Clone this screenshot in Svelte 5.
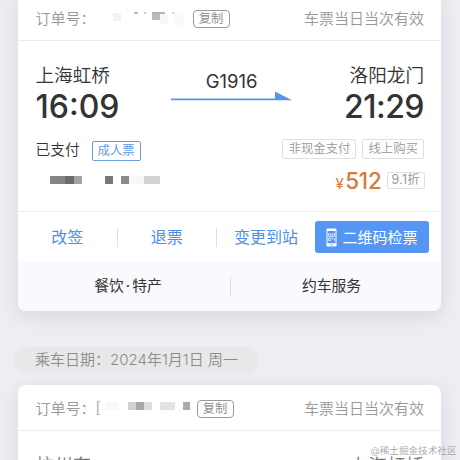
<script>
  const orders = [
    {
      id: 1,
      mosaicWidth: 72,
      mosaic: [
        { x: 0, y: 2, w: 8, h: 8, c: '#f3f3f3' },
        { x: 21, y: 1, w: 4, h: 2, c: '#bdbdbd' },
        { x: 31, y: 1, w: 2, h: 2, c: '#c8c8c8' },
        { x: 39, y: 1, w: 13, h: 2, c: '#b4b4b4' },
        { x: 39, y: 3, w: 8, h: 6, c: '#bababa' },
        { x: 47, y: 3, w: 8, h: 10, c: '#f7f7f7' },
        { x: 59, y: 1, w: 3, h: 2, c: '#dedede' },
        { x: 62, y: 4, w: 9, h: 10, c: '#fafafa' }
      ],
      prefix: '',
      from: '上海虹桥',
      to: '洛阳龙门',
      full: true
    },
    {
      id: 2,
      mosaicWidth: 85,
      mosaic: [
        { x: 0, y: 1, w: 14, h: 8, c: '#f8f8f8' },
        { x: 23, y: 1, w: 8, h: 8, c: '#d2d2d2' },
        { x: 31, y: 1, w: 8, h: 8, c: '#a9a9a9' },
        { x: 39, y: 1, w: 8, h: 8, c: '#dedede' },
        { x: 55, y: 1, w: 15, h: 8, c: '#e3e3e3' },
        { x: 78, y: 1, w: 7, h: 8, c: '#aaaaaa' }
      ],
      prefix: '[',
      from: '杭州东',
      to: '上海虹桥',
      full: false
    }
  ];

  const passenger = [
    { x: 0, w: 15, c: '#858585' },
    { x: 15, w: 9, c: '#6b6b6b' },
    { x: 24, w: 8, c: '#a3a3a3' },
    { x: 55, w: 8, c: '#777777' },
    { x: 71, w: 8, c: '#8a8a8a' },
    { x: 79, w: 15, c: '#f8f8f8' },
    { x: 94, w: 16, c: '#d2d2d2' }
  ];

  const actions = ['改签', '退票', '变更到站'];
</script>

<div class="page">
  {#each orders as order (order.id)}
    {#if order.id === 2}
      <div class="date">乘车日期：<span>2024年1月1日 周一</span></div>
    {/if}

    <section class="card">
      <header class="head">
        <span class="label">订单号：</span>
        <span class="prefix" class:wide={order.prefix}>{order.prefix}</span>
        <svg class="number" width={order.mosaicWidth} height="14" viewBox="0 0 {order.mosaicWidth} 14">
          {#each order.mosaic as m}
            <rect x={m.x} y={m.y} width={m.w} height={m.h} fill={m.c} />
          {/each}
        </svg>
        <button class="copy">复制</button>
        <span class="valid">车票当日当次有效</span>
      </header>

      {#if order.full}
        <div class="body">
          <div class="trip">
            <div class="stop">
              <div class="station">{order.from}</div>
              <div class="time">16:09</div>
            </div>
            <div class="train">
              <div class="code">G1916</div>
              <svg width="122" height="10" viewBox="0 0 122 10">
                <path d="M0 7.4h104V0.6L121 9.2H0z" fill="#5295ee" />
              </svg>
            </div>
            <div class="stop right">
              <div class="station">{order.to}</div>
              <div class="time arrive">21:29</div>
            </div>
          </div>

          <div class="row status">
            <span class="paid">已支付</span>
            <span class="tag adult">成人票</span>
            <span class="tag first">非现金支付</span>
            <span class="tag">线上购买</span>
          </div>

          <div class="row fare">
            <svg class="name" width="112" height="8" viewBox="0 0 112 8">
              {#each passenger as p}
                <rect x={p.x} y="0" width={p.w} height="8" fill={p.c} />
              {/each}
            </svg>
            <span class="price"><small>¥</small>512</span>
            <span class="tag discount">9.1折</span>
          </div>
        </div>

        <div class="actions">
          {#each actions as action}
            <div class="action">{action}</div>
          {/each}
          <button class="qr">
            <svg width="11" height="19" viewBox="0 0 11 19">
              <rect x="0.5" y="0.5" width="10" height="18" rx="1.2" fill="#fff" />
              <path d="M1.5 3h8v12.2h-8z" fill="#5596f5" />
              <path d="M4.5 17h2" stroke="#5596f5" stroke-width="1" />
              <path d="M2.6 5.8h2.2v2.5H2.6zM6.3 5.8h2.2v2.5H6.3zM2.6 10h2.2v2.5H2.6zM6.2 10h1v1h1.3v1.8M5.5 8v1.3" fill="none" stroke="#fff" stroke-width="0.7" />
            </svg>
            <span>二维码检票</span>
          </button>
        </div>

        <footer class="services">
          <div class="service food">餐饮<span class="dot">·</span>特产</div>
          <div class="service car">约车服务</div>
        </footer>
      {:else}
        <div class="body pending">
          <div class="station">{order.from}</div>
          <div class="station">{order.to}</div>
        </div>
      {/if}
    </section>
  {/each}

  <div class="watermark">@稀土掘金技术社区</div>
</div>

<style>
  :global(body) {
    background: #ededf2;
  }

  .page {
    position: relative;
    display: flow-root;
    width: 460px;
    height: 460px;
    overflow: hidden;
    background: #ededf2;
    font-family: Inter, 'Noto Sans CJK SC', sans-serif;
    font-weight: 350;
    color: #333;
    white-space: nowrap;
  }

  .card {
    width: 423px;
    margin: -5px 0 0 18px;
    overflow: hidden;
    border-radius: 8px;
    background: #fff;
    box-shadow: 0 5px 18px rgba(60, 60, 80, 0.12);
  }

  .head {
    display: flex;
    align-items: center;
    box-sizing: border-box;
    height: 46px;
    padding: 0 17px 0 17.5px;
    border-bottom: 1px solid #ebebeb;
    color: #999;
    font-size: 15px;
  }

  .label {
    width: 60px;
  }

  .prefix {
    width: 17px;
  }

  .prefix.wide {
    width: 9.5px;
  }

  button {
    margin: 0;
    font-family: inherit;
    font-weight: inherit;
  }

  .copy {
    box-sizing: border-box;
    width: 37px;
    height: 18px;
    margin: 2px 0 0 8px;
    padding: 0;
    border: 1px solid #999;
    border-radius: 4px;
    background: none;
    color: #888;
    font-size: 12.3px;
    line-height: 15px;
  }

  .prefix.wide ~ .copy {
    margin-left: 6.5px;
  }

  .valid {
    margin-left: auto;
  }

  .body {
    box-sizing: border-box;
    height: 171px;
    padding: 22px 17px 0 17.5px;
    border-bottom: 1px solid #eee;
  }

  .trip {
    display: flex;
    justify-content: space-between;
    height: 75px;
  }

  .station {
    font-size: 18.6px;
    line-height: 24px;
  }

  .time {
    margin-top: 1px;
    font-size: 32px;
    font-weight: 500;
    line-height: 38px;
  }

  .arrive {
    letter-spacing: -0.5px;
  }

  .right {
    text-align: right;
  }

  .train {
    display: flex;
    flex-direction: column;
    align-items: center;
    padding-top: 7px;
  }

  .code {
    height: 21px;
    font-size: 18.5px;
    font-weight: 400;
    line-height: 22px;
  }

  .train svg {
    display: block;
  }

  .row {
    display: flex;
    align-items: center;
  }

  .status {
    height: 24px;
  }

  .paid {
    margin-top: -3px;
    font-size: 14.7px;
  }

  .tag {
    box-sizing: border-box;
    height: 20px;
    margin: -2px 0 0 6px;
    padding: 0 5px;
    border: 1px solid #e0e0e0;
    border-radius: 2px;
    color: #999;
    font-size: 12.4px;
    line-height: 18px;
  }

  .adult {
    margin: 1px 0 0 12px;
    border-color: #6a9fe6;
    color: #5a94e4;
  }

  .first {
    margin-left: auto;
  }

  .fare {
    height: 36px;
  }

  .name {
    margin-left: 14px;
  }

  .price {
    margin-left: auto;
    color: #d9783a;
    font-size: 22.4px;
    font-weight: 500;
    letter-spacing: -0.2px;
  }

  .price small {
    margin-right: 1.5px;
    font-size: 15px;
    font-weight: 400;
  }

  .discount {
    height: 17px;
    margin: 0 -1px 0 5px;
    padding: 0 4px;
    font-weight: 400;
    letter-spacing: 0.3px;
    line-height: 14px;
  }

  .actions {
    display: flex;
    align-items: center;
    height: 50px;
  }

  .action {
    flex: none;
    box-sizing: border-box;
    width: 99.5px;
    height: 19px;
    border-right: 1px solid #dedede;
    color: #4d8ee6;
    font-size: 16px;
    font-weight: 400;
    line-height: 18px;
    text-align: center;
  }

  .action:nth-child(3) {
    width: 98px;
    border: 0;
  }

  .qr {
    display: flex;
    align-items: center;
    justify-content: center;
    gap: 5px;
    flex: none;
    width: 114px;
    height: 32px;
    padding: 0;
    border: 0;
    border-radius: 3px;
    background: #5596f5;
    color: #fff;
    font-size: 15px;
    font-weight: 400;
  }

  .qr span {
    margin-top: -1px;
  }

  .services {
    display: flex;
    align-items: center;
    height: 49px;
    background: #f9f9fe;
  }

  .service {
    box-sizing: border-box;
    height: 19px;
    font-size: 14.8px;
    font-weight: 400;
    line-height: 18px;
    text-align: center;
  }

  .food {
    width: 212px;
    padding-left: 8px;
  }

  .car {
    flex: 1;
    border-left: 1px solid #dedee2;
    padding-right: 9px;
  }

  .dot {
    padding: 0 2px;
  }

  .date {
    box-sizing: border-box;
    width: 245px;
    height: 26px;
    margin: 36px 0 17px 14px;
    padding-left: 21px;
    border-radius: 13px;
    background: #e8e8e9;
    color: #8c8c8c;
    font-size: 15px;
    line-height: 25px;
  }

  .pending {
    display: flex;
    justify-content: space-between;
    color: #777;
  }

  .watermark {
    position: absolute;
    right: 3.5px;
    bottom: 2px;
    color: #a5a5a5;
    font-size: 9.6px;
    line-height: 14px;
  }
</style>
